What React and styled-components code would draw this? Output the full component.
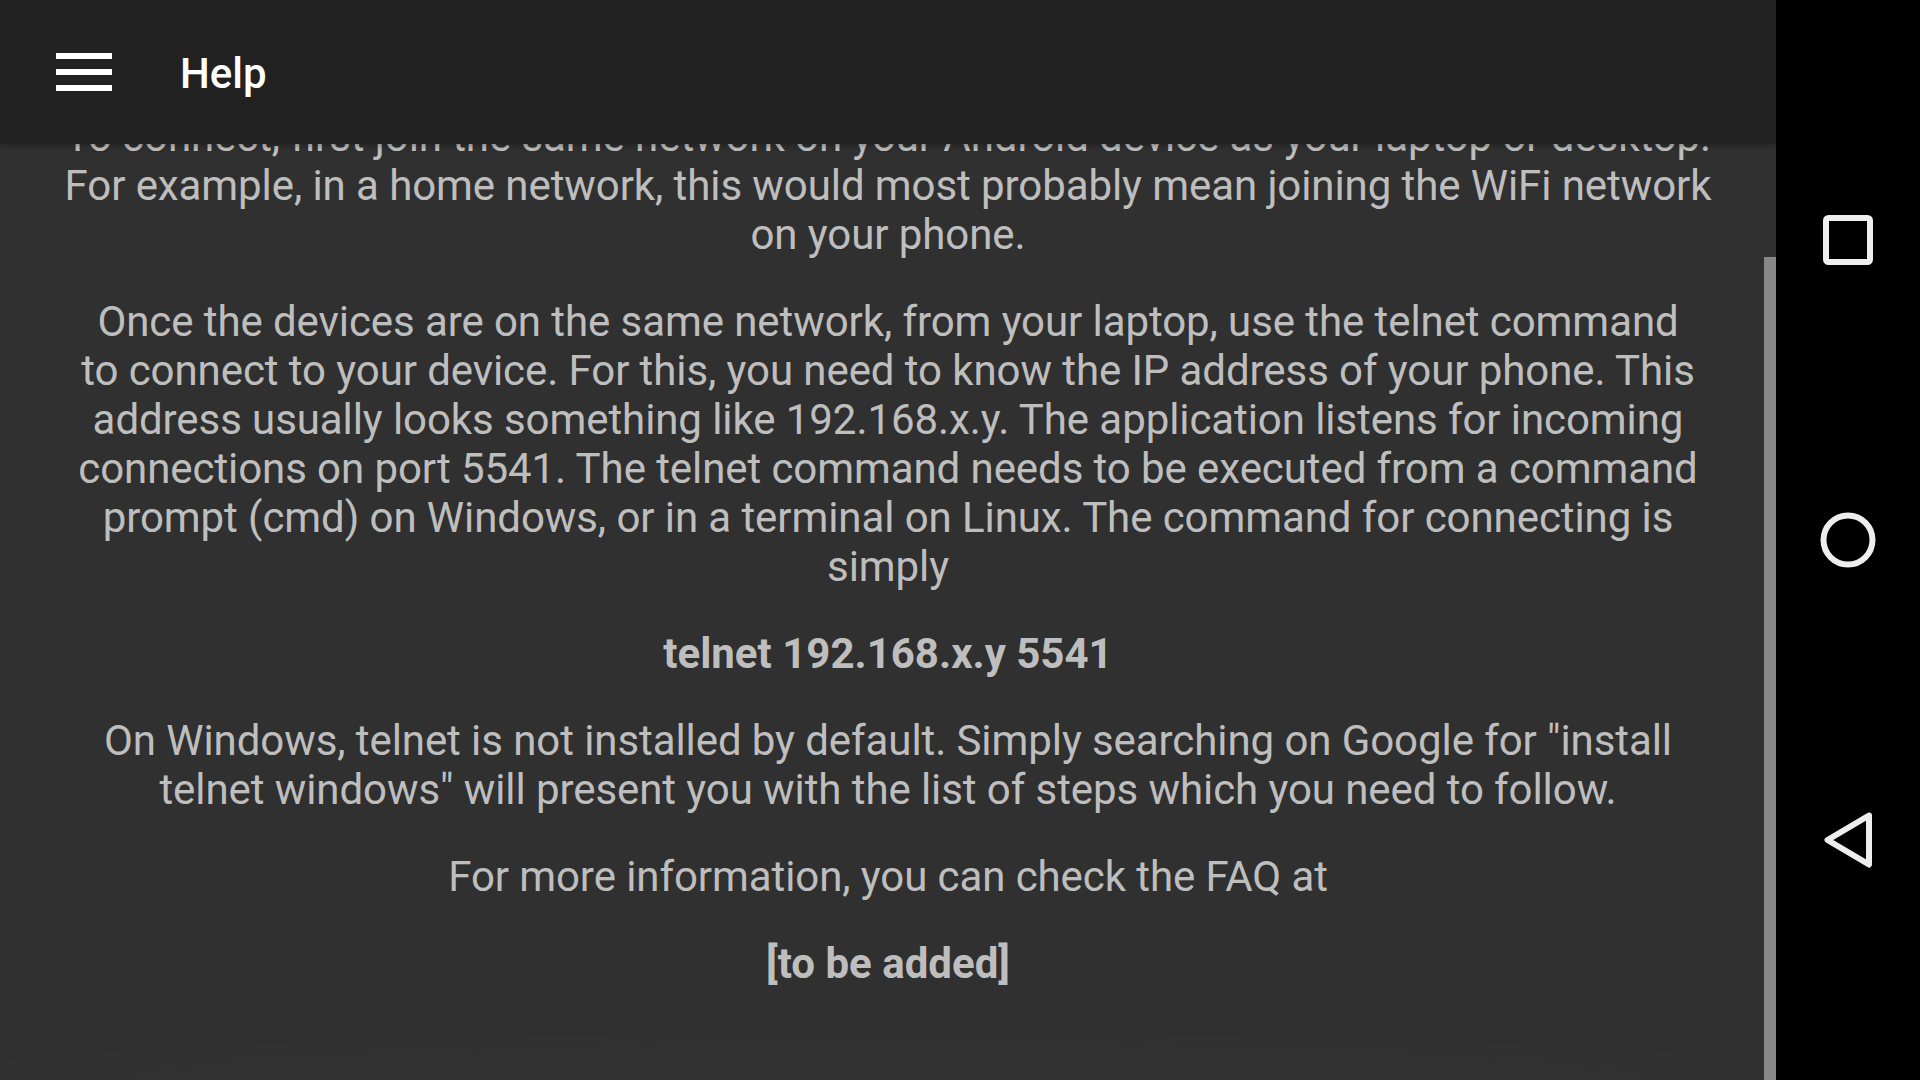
import React, { useLayoutEffect, useRef, useState } from "react";
import styled, { createGlobalStyle } from "styled-components";

const Global = createGlobalStyle`
  html, body { margin: 0; padding: 0; background: #000; }
  body { font-family: Roboto, "Noto Sans", "Liberation Sans", sans-serif; }
  #root { width: 1920px; height: 1080px; }
`;

const Screen = styled.div`
  display: flex;
  width: 1920px;
  height: 1080px;
  overflow: hidden;
`;

const AppColumn = styled.div`
  flex: 1;
  display: flex;
  flex-direction: column;
  background: #303030;
  min-width: 0;
`;

const Toolbar = styled.header`
  position: relative;
  z-index: 2;
  height: 144px;
  flex: 0 0 144px;
  display: flex;
  align-items: center;
  padding-left: 56px;
  gap: 68px;
  background: #212121;
  box-shadow: 0 2px 5px rgba(0, 0, 0, 0.28);
`;

const Title = styled.h1`
  margin: 0;
  padding-top: 3px;
  font-family: Roboto, "Noto Sans", sans-serif;
  font-weight: 500;
  font-size: 42px;
  line-height: 49px;
  color: #ffffff;
`;

const ScrollWrap = styled.div`
  position: relative;
  flex: 1;
  min-height: 0;
`;

const Scroller = styled.main`
  height: 100%;
  overflow-y: auto;
  scrollbar-width: none;
  &::-webkit-scrollbar { display: none; }
`;

const Content = styled.div`
  padding: 96px 24px 92px;
  text-align: center;
  color: rgba(255, 255, 255, 0.7);
  font-family: Roboto, "Noto Sans", sans-serif;
  font-size: 42px;
  line-height: 49px;
`;

const Para = styled.p`
  margin: 0 0 38px;
  white-space: pre;
  font-weight: ${(p) => (p.$bold ? 700 : 400)};
  letter-spacing: ${(p) => (p.$bold ? "0" : "-0.08px")};
  &:last-child { margin-bottom: 0; }
`;

const Thumb = styled.div`
  position: absolute;
  right: 0;
  width: 12px;
  background: #878787;
`;

const Glow = styled.div`
  position: absolute;
  left: 0;
  right: 0;
  bottom: 0;
  height: 50px;
  pointer-events: none;
  background: radial-gradient(ellipse 60% 100% at 50% 100%, rgba(255,255,255,0.012), rgba(255,255,255,0.008) 70%, rgba(255,255,255,0) 100%);
`;

const NavBar = styled.nav`
  width: 144px;
  flex: 0 0 144px;
  background: #000;
  display: flex;
  flex-direction: column;
  align-items: center;
  justify-content: center;
  gap: 244px;
`;

const NavButton = styled.button`
  width: 56px;
  height: 56px;
  padding: 0;
  border: 0;
  background: transparent;
  display: flex;
  align-items: center;
  justify-content: center;
  svg { display: block; }
`;

const MenuButton = styled.button`
  width: 56px;
  height: 44px;
  padding: 0;
  border: 0;
  background: transparent;
  svg { display: block; }
`;

const MenuIcon = () => (
  <svg width="56" height="38" viewBox="0 0 56 38">
    <rect x="0" y="0" width="56" height="6" fill="#fff" />
    <rect x="0" y="16" width="56" height="6" fill="#fff" />
    <rect x="0" y="32" width="56" height="6" fill="#fff" />
  </svg>
);

const RecentsIcon = () => (
  <svg width="56" height="56" viewBox="0 0 56 56">
    <rect x="6" y="6" width="44" height="44" rx="2.5" fill="none" stroke="#eeeeee" strokeWidth="6" />
  </svg>
);

const HomeIcon = () => (
  <svg width="56" height="56" viewBox="0 0 56 56">
    <circle cx="28" cy="28" r="24.5" fill="none" stroke="#eeeeee" strokeWidth="6" />
  </svg>
);

const BackIcon = () => (
  <svg width="56" height="56" viewBox="0 0 56 56">
    <path d="M49 3.5 L7.5 28 L49 52.5 Z" fill="none" stroke="#eeeeee" strokeWidth="6" strokeLinejoin="round" />
  </svg>
);

const paragraphs = [
  {
    text:
      "To connect, first join the same network on your Android device as your laptop or desktop.\nFor example, in a home network, this would most probably mean joining the WiFi network\non your phone.",
  },
  {
    text:
      "Once the devices are on the same network, from your laptop, use the telnet command\nto connect to your device. For this, you need to know the IP address of your phone. This\naddress usually looks something like 192.168.x.y. The application listens for incoming\nconnections on port 5541. The telnet command needs to be executed from a command\nprompt (cmd) on Windows, or in a terminal on Linux. The command for connecting is\nsimply",
  },
  { text: "telnet 192.168.x.y 5541", bold: true },
  {
    text:
      "On Windows, telnet is not installed by default. Simply searching on Google for \"install\ntelnet windows\" will present you with the list of steps which you need to follow.",
  },
  { text: "For more information, you can check the FAQ at" },
  { text: "[to be added]", bold: true },
];

export default function App() {
  const ref = useRef(null);
  const [thumb, setThumb] = useState({ top: 0, height: 0 });

  useLayoutEffect(() => {
    const el = ref.current;
    if (!el) return;
    el.scrollTop = el.scrollHeight;
    const update = () => {
      const { scrollTop, scrollHeight, clientHeight } = el;
      const h = (clientHeight * clientHeight) / scrollHeight;
      const t = (scrollTop * clientHeight) / scrollHeight;
      setThumb({ top: t, height: h });
    };
    update();
    el.addEventListener("scroll", update);
    return () => el.removeEventListener("scroll", update);
  }, []);

  return (
    <>
      <Global />
      <Screen>
        <AppColumn>
          <Toolbar>
            <MenuButton aria-label="Open navigation">
              <MenuIcon />
            </MenuButton>
            <Title>Help</Title>
          </Toolbar>
          <ScrollWrap>
            <Scroller ref={ref}>
              <Content>
                {paragraphs.map((p, i) => (
                  <Para key={i} $bold={p.bold}>
                    {p.text}
                  </Para>
                ))}
              </Content>
            </Scroller>
            <Glow />
            <Thumb style={{ top: thumb.top, height: thumb.height }} />
          </ScrollWrap>
        </AppColumn>
        <NavBar>
          <NavButton aria-label="Recents">
            <RecentsIcon />
          </NavButton>
          <NavButton aria-label="Home">
            <HomeIcon />
          </NavButton>
          <NavButton aria-label="Back">
            <BackIcon />
          </NavButton>
        </NavBar>
      </Screen>
    </>
  );
}
